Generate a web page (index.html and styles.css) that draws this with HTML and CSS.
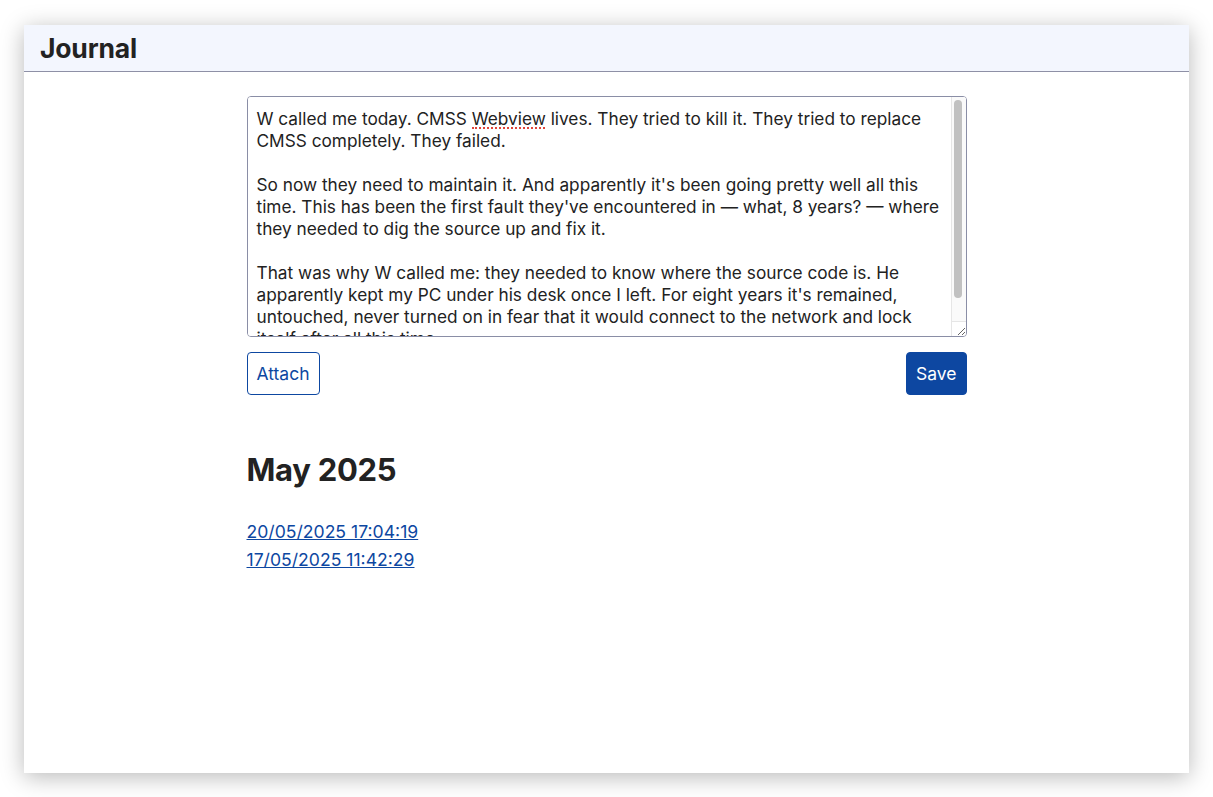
FILE: index.html
```html
<!DOCTYPE html>
<html lang="en">
<head>
    <meta charset="UTF-8">
    <meta name="viewport" content="width=device-width, initial-scale=1.0">
    <title>Journal</title>
    <link rel="stylesheet" href="styles.css">
</head>
<body>
    <div class="window">
        <header class="topbar">
            <h1 class="title">Journal</h1>
        </header>
        <main class="content">
            <form class="entry-form">
                <div class="editor">
                    <textarea class="entry" spellcheck="false">W called me today. CMSS Webview lives. They tried to kill it. They tried to replace CMSS completely. They failed.

So now they need to maintain it. And apparently it's been going pretty well all this time. This has been the first fault they've encountered in — what, 8 years? — where they needed to dig the source up and fix it.

That was why W called me: they needed to know where the source code is. He apparently kept my PC under his desk once I left. For eight years it's remained, untouched, never turned on in fear that it would connect to the network and lock itself after all this time.</textarea>
                    <span class="spell-mark"></span>
                    <div class="scrollbar"><div class="thumb"></div></div>
                    <div class="corner"></div>
                </div>
                <div class="actions">
                    <button type="button" class="btn btn-outline">Attach</button>
                    <button type="submit" class="btn btn-primary">Save</button>
                </div>
            </form>

            <section class="month">
                <h2 class="month-title">May 2025</h2>
                <ul class="entries">
                    <li><a href="#">20/05/2025 17:04:19</a></li>
                    <li><a href="#">17/05/2025 11:42:29</a></li>
                </ul>
            </section>
        </main>
    </div>
</body>
</html>
```

FILE: styles.css
```css
* {
    margin: 0;
    padding: 0;
    box-sizing: border-box;
    font-family: Inter, "Noto Sans", sans-serif;
}
body {
    background: #fff;
    padding: 25px 24px;
    color: #222;
}
.window {
    width: 1165px;
    height: 748px;
    background: #fff;
    box-shadow: 0 4px 22px rgba(0, 0, 0, 0.28);
}
.topbar {
    background: #f3f6fe;
    border-bottom: 1px solid #8e90a6;
    height: 47px;
    display: flex;
    align-items: center;
    padding: 0 16px;
}
.title {
    font-size: 26.5px;
    font-weight: 700;
    color: #222;
    letter-spacing: -0.2px;
}
.content {
    width: 720px;
    margin: 0 auto;
    padding-top: 24px;
}
.entry-form {
    display: flex;
    flex-direction: column;
    gap: 15px;
}
.editor {
    position: relative;
    height: 241px;
}
.entry {
    display: block;
    width: 720px;
    height: 241px;
    border: 1px solid #8a8ea6;
    border-radius: 4px;
    padding: 11px 24px 9px 9px;
    font-size: 17.25px;
    line-height: 22px;
    color: #222;
    resize: vertical;
    overflow-y: scroll;
    outline: none;
}
/* fake spellcheck squiggle under "Webview" */
.spell-mark {
    position: absolute;
    left: 225px;
    top: 31px;
    width: 73px;
    border-bottom: 2px dotted #e0453a;
}
.scrollbar {
    position: absolute;
    top: 1px;
    right: 1px;
    width: 15px;
    height: 224px;
    background: #fafafa;
    border-left: 1px solid #e6e6e6;
    border-top-right-radius: 3px;
}
.thumb {
    margin: 3px 0 0 2px;
    width: 8px;
    height: 198px;
    border-radius: 4px;
    background: #c1c1c1;
}
.corner {
    position: absolute;
    right: 1px;
    bottom: 1px;
    width: 15px;
    height: 15px;
    border-left: 1px solid #e6e6e6;
    border-top: 1px solid #e6e6e6;
    pointer-events: none;
}
.actions {
    display: flex;
    justify-content: space-between;
}
.btn {
    font-size: 17.5px;
    padding: 0 9px;
    height: 43px;
    border-radius: 4px;
    cursor: pointer;
}
.btn-outline {
    background: #fff;
    color: #0d47a1;
    border: 1px solid #0d47a1;
}
.btn-primary {
    background: #0d47a1;
    color: #fff;
    border: 1px solid #0d47a1;
    padding: 0 9px;
}
.month {
    margin-top: 56px;
}
.month-title {
    font-size: 31px;
    font-weight: 700;
    color: #222;
    letter-spacing: -0.3px;
}
.entries {
    list-style: none;
    margin-top: 30px;
}
.entries li {
    line-height: 28px;
}
.entries a {
    font-size: 17.6px;
    color: #0d47a1;
}
```
